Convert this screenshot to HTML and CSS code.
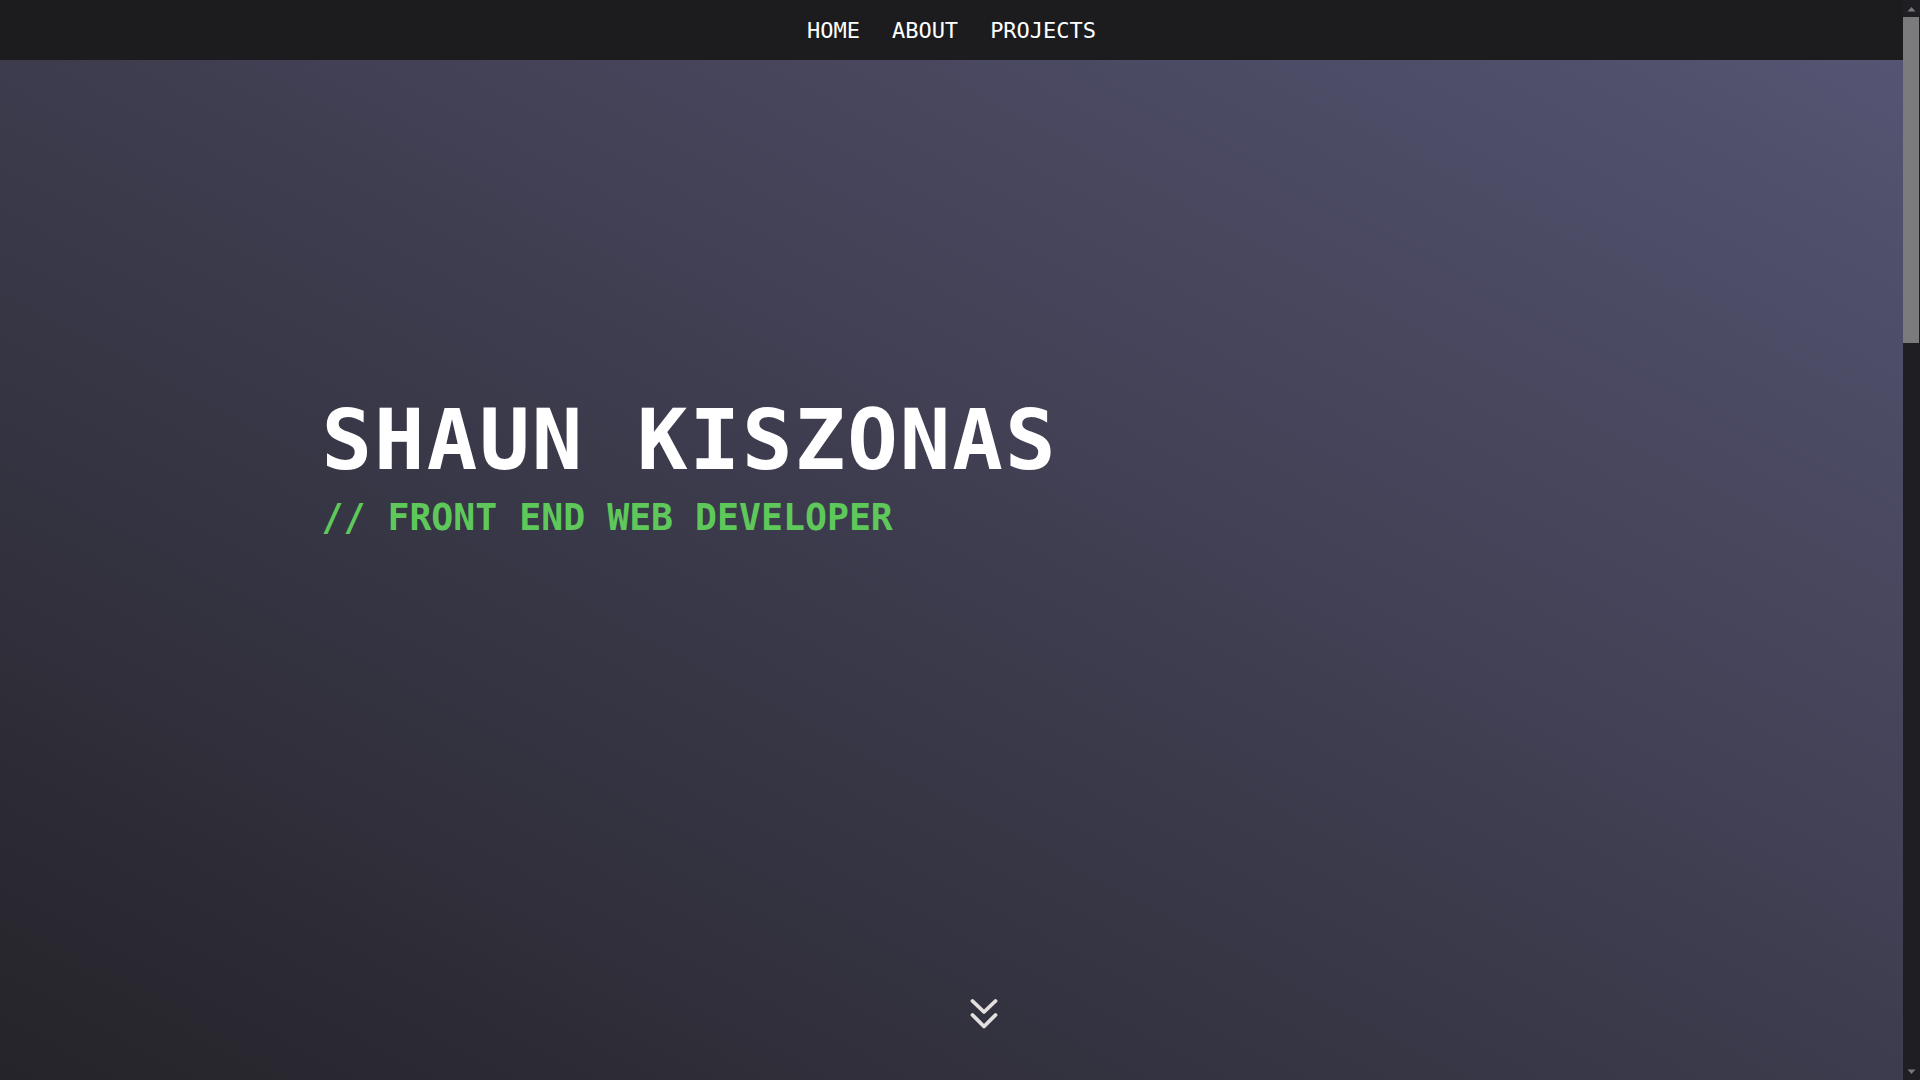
FILE: index.html
```html
<!DOCTYPE html>
<html lang="en">
<head>
<meta charset="utf-8">
<title>Shaun Kiszonas</title>
<link rel="stylesheet" href="styles.css">
</head>
<body>
<div class="window">
  <div class="page">
    <nav class="nav">
      <a class="nav-link" href="#home">HOME</a>
      <a class="nav-link" href="#about">ABOUT</a>
      <a class="nav-link" href="#projects">PROJECTS</a>
    </nav>
    <header class="hero" id="home">
      <div class="hero-inner">
        <h1 class="hero-name">SHAUN KISZONAS</h1>
        <p class="hero-role">// FRONT END WEB DEVELOPER</p>
      </div>
      <a class="scroll-down" href="#about" aria-label="Scroll down">
        <svg width="28" height="32" viewBox="0 0 28 32" fill="none" stroke="#e4e0e0" stroke-width="3.8" stroke-linecap="round" stroke-linejoin="round">
          <polyline points="2.5,3 14,14 25.5,3"/>
          <polyline points="2.5,17 14,28.5 25.5,17"/>
        </svg>
      </a>
    </header>
  </div>
  <div class="scrollbar" aria-hidden="true">
    <div class="sb-btn">
      <svg width="9" height="6" viewBox="0 0 9 6"><polygon points="0.5,5.5 4.5,1 8.5,5.5" fill="#7a7a7e"/></svg>
    </div>
    <div class="sb-track">
      <div class="sb-thumb"></div>
    </div>
    <div class="sb-btn">
      <svg width="9" height="6" viewBox="0 0 9 6"><polygon points="0.5,0.5 4.5,5 8.5,0.5" fill="#7a7a7e"/></svg>
    </div>
  </div>
</div>
</body>
</html>
```

FILE: styles.css
```css
html, body {
  margin: 0;
  height: 100%;
  overflow: hidden;
  background: #1c1c1f;
}
body {
  font-family: "DejaVu Sans Mono", monospace;
  color: #ffffff;
}
.window {
  display: flex;
  height: 100vh;
}
.page {
  flex: 1;
  display: flex;
  flex-direction: column;
  min-width: 0;
}
.nav {
  height: 60px;
  flex: none;
  background: #1c1c1f;
  display: flex;
  justify-content: center;
  align-items: center;
  gap: 32px;
  padding-top: 2px;
  box-sizing: border-box;
}
.nav-link {
  color: #ffffff;
  text-decoration: none;
  font-size: 22px;
  line-height: 1;
}
.hero {
  position: relative;
  flex: 1;
  background: linear-gradient(to top right, #25242a 0%, #3d3c4e 50%, #555472 100%);
}
.hero-inner {
  width: 1260px;
  margin: 0 auto;
  padding-top: 338px;
}
.hero-name {
  margin: 0;
  font-size: 84px;
  line-height: 1;
  font-weight: bold;
  letter-spacing: 2px;
  color: #ffffff;
}
.hero-role {
  margin: 18px 0 0;
  font-size: 36.5px;
  line-height: 1;
  font-weight: bold;
  color: #5ec95a;
}
.scroll-down {
  position: absolute;
  left: 50%;
  margin-left: 18px;
  bottom: 50px;
  display: block;
  width: 28px;
  height: 32px;
}
.scroll-down svg {
  display: block;
}
.scrollbar {
  width: 17px;
  flex: none;
  display: flex;
  flex-direction: column;
  background: #1f1f23;
}
.sb-btn {
  height: 17px;
  flex: none;
  display: flex;
  align-items: center;
  justify-content: center;
}
.sb-track {
  flex: 1;
}
.sb-thumb {
  height: 326px;
  margin: 0 1px 0 0;
  background: #7b7b7d;
}
```
